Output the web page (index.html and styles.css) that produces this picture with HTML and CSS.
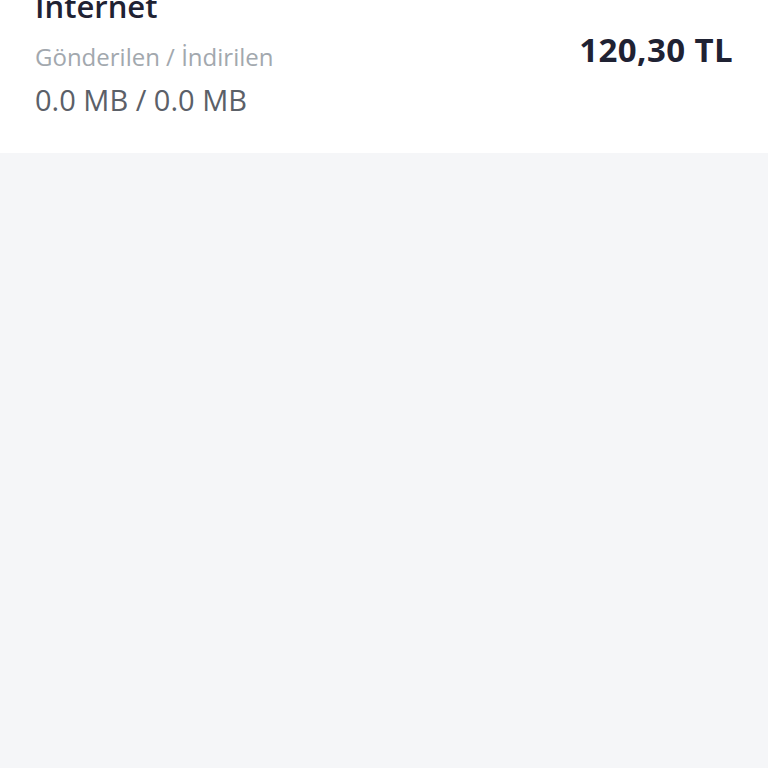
FILE: index.html
```html
<!DOCTYPE html>
<html lang="tr">
<head>
    <meta charset="UTF-8">
    <meta name="viewport" content="width=device-width, initial-scale=1.0">
    <title>Internet</title>
    <link rel="stylesheet" href="styles.css">
</head>
<body>
    <div class="usage-card">
        <div class="usage-info">
            <h2 class="usage-title">Internet</h2>
            <div class="usage-label">Gönderilen / İndirilen</div>
            <div class="usage-value">0.0 MB / 0.0 MB</div>
        </div>
        <div class="usage-price">120,30 TL</div>
    </div>
</body>
</html>
```

FILE: styles.css
```css
html, body {
    height: 100%;
}
body {
    margin: 0;
    font-family: 'Open Sans', Lato, sans-serif;
    background-color: #f5f6f8;
    color: #1f2233;
}
.usage-card {
    display: flex;
    justify-content: space-between;
    align-items: flex-start;
    background-color: #ffffff;
    margin-top: -14px;
    padding: 0 35px;
    height: 167px;
    box-sizing: border-box;
}
.usage-title {
    margin: 0;
    font-size: 31px;
    font-weight: 600;
    line-height: 40px;
    color: #1f2233;
}
.usage-label {
    margin-top: 16px;
    font-size: 24px;
    line-height: 30px;
    color: #a2a8ae;
}
.usage-value {
    margin-top: 10px;
    font-size: 29px;
    line-height: 36px;
    color: #5b6068;
}
.usage-price {
    margin-top: 44px;
    font-size: 33px;
    font-weight: 700;
    letter-spacing: 0.4px;
    line-height: 40px;
    color: #1f2233;
}
```
